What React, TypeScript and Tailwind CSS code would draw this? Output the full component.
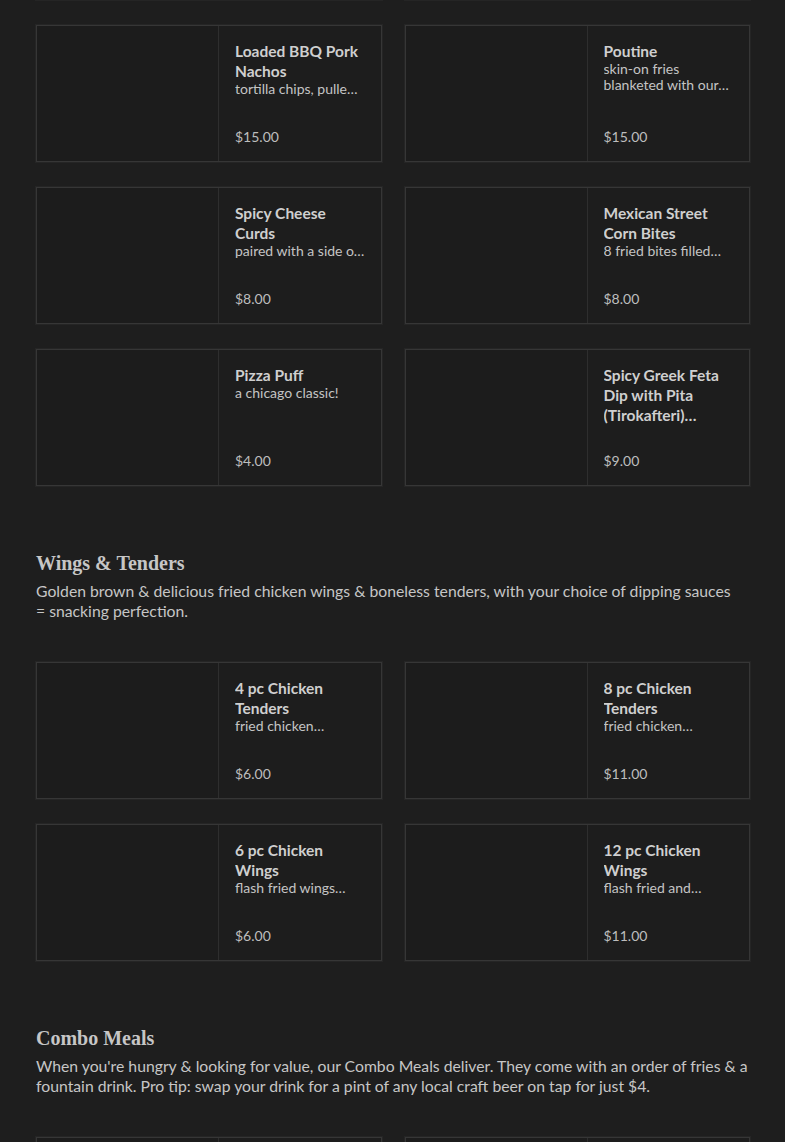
import React from "react";

interface MenuItem {
  name: string;
  desc?: string;
  price: string;
  nameClamp: string;
  descClamp: string;
}

interface Section {
  title?: string;
  blurb?: string;
  items: MenuItem[];
}

const sections: Section[] = [
  {
    items: [
      { name: "Loaded BBQ Pork Nachos", desc: "tortilla chips, pulled pork, queso, pickled jalapeños", price: "$15.00", nameClamp: "line-clamp-2", descClamp: "line-clamp-1" },
      { name: "Poutine", desc: "skin-on fries blanketed with our housemade gravy and cheese curds", price: "$15.00", nameClamp: "line-clamp-2", descClamp: "line-clamp-2" },
      { name: "Spicy Cheese Curds", desc: "paired with a side of ranch", price: "$8.00", nameClamp: "line-clamp-2", descClamp: "line-clamp-1" },
      { name: "Mexican Street Corn Bites", desc: "8 fried bites filled with elote-style street corn", price: "$8.00", nameClamp: "line-clamp-2", descClamp: "line-clamp-1" },
      { name: "Pizza Puff", desc: "a chicago classic!", price: "$4.00", nameClamp: "line-clamp-2", descClamp: "line-clamp-1" },
      { name: "Spicy Greek Feta Dip with Pita (Tirokafteri) appetizer", price: "$9.00", nameClamp: "line-clamp-3", descClamp: "line-clamp-1" },
    ],
  },
  {
    title: "Wings & Tenders",
    blurb:
      "Golden brown & delicious fried chicken wings & boneless tenders, with your choice of dipping sauces =\u00a0snacking perfection.",
    items: [
      { name: "4 pc Chicken Tenders", desc: "fried chicken tenderloins with your choice of sauce", price: "$6.00", nameClamp: "line-clamp-2", descClamp: "line-clamp-1" },
      { name: "8 pc Chicken Tenders", desc: "fried chicken tenderloins with your choice of sauce", price: "$11.00", nameClamp: "line-clamp-2", descClamp: "line-clamp-1" },
      { name: "6 pc Chicken Wings", desc: "flash fried wings drenched in sauce", price: "$6.00", nameClamp: "line-clamp-2", descClamp: "line-clamp-1" },
      { name: "12 pc Chicken Wings", desc: "flash fried and smothered in sauce", price: "$11.00", nameClamp: "line-clamp-2", descClamp: "line-clamp-1" },
    ],
  },
  {
    title: "Combo Meals",
    blurb:
      "When you're hungry & looking for value, our Combo Meals deliver. They come with an order of fries & a fountain drink. Pro tip: swap your drink for a pint of any local craft beer on tap for just $4.",
    items: [],
  },
];

const CardShell: React.FC<{ children?: React.ReactNode }> = ({ children }) => (
  <div className="flex h-[137px] border border-[#363636] bg-[#1d1d1d] shadow-[0_0_0_1px_#252525]">
    <div className="w-[182px] shrink-0 border-r border-[#2e2e2e] bg-[#1c1c1c]" />
    <div className="flex min-w-0 flex-1 flex-col justify-between px-4 pt-[15px] pb-[16px]">
      {children}
    </div>
  </div>
);

const ItemCard: React.FC<{ item: MenuItem }> = ({ item }) => (
  <CardShell>
    <div>
      <h3 className={`${item.nameClamp} text-[15.5px] font-bold leading-5 text-[#cfcfcf]`}>
        {item.name}
      </h3>
      {item.desc && (
        <p className={`${item.descClamp} text-[14px] leading-4 text-[#c4c4c4]`}>{item.desc}</p>
      )}
    </div>
    <p className="text-[14px] leading-4 text-[#bdbdbd]">{item.price}</p>
  </CardShell>
);

export default function App() {
  return (
    <div className="h-[1142px] overflow-hidden bg-[#1e1e1e] font-['Lato','Open_Sans',sans-serif]">
      <div className="-mt-[137px] px-9 pr-[35px]">
        {sections.map((section, i) => (
          <section key={i} className={i === 0 ? "" : "mt-[63px]"}>
            {section.title && (
              <div className="mb-[41px]">
                <h2 className="font-['Liberation_Serif',serif] text-[20px] font-bold leading-7 text-[#c6c6c6]">
                  {section.title}
                </h2>
                <p className="mt-[4px] text-[15.75px] leading-5 text-[#c6c6c6]">{section.blurb}</p>
              </div>
            )}
            <div className="grid grid-cols-2 gap-x-[23px] gap-y-[25px]">
              {/* previous row, scrolled out of view; the last section's cards sit below the fold */}
              {(i === 0 || section.items.length === 0) && (
                <>
                  <CardShell />
                  <CardShell />
                </>
              )}
              {section.items.map((item) => (
                <ItemCard key={item.name} item={item} />
              ))}
            </div>
          </section>
        ))}
      </div>
    </div>
  );
}
